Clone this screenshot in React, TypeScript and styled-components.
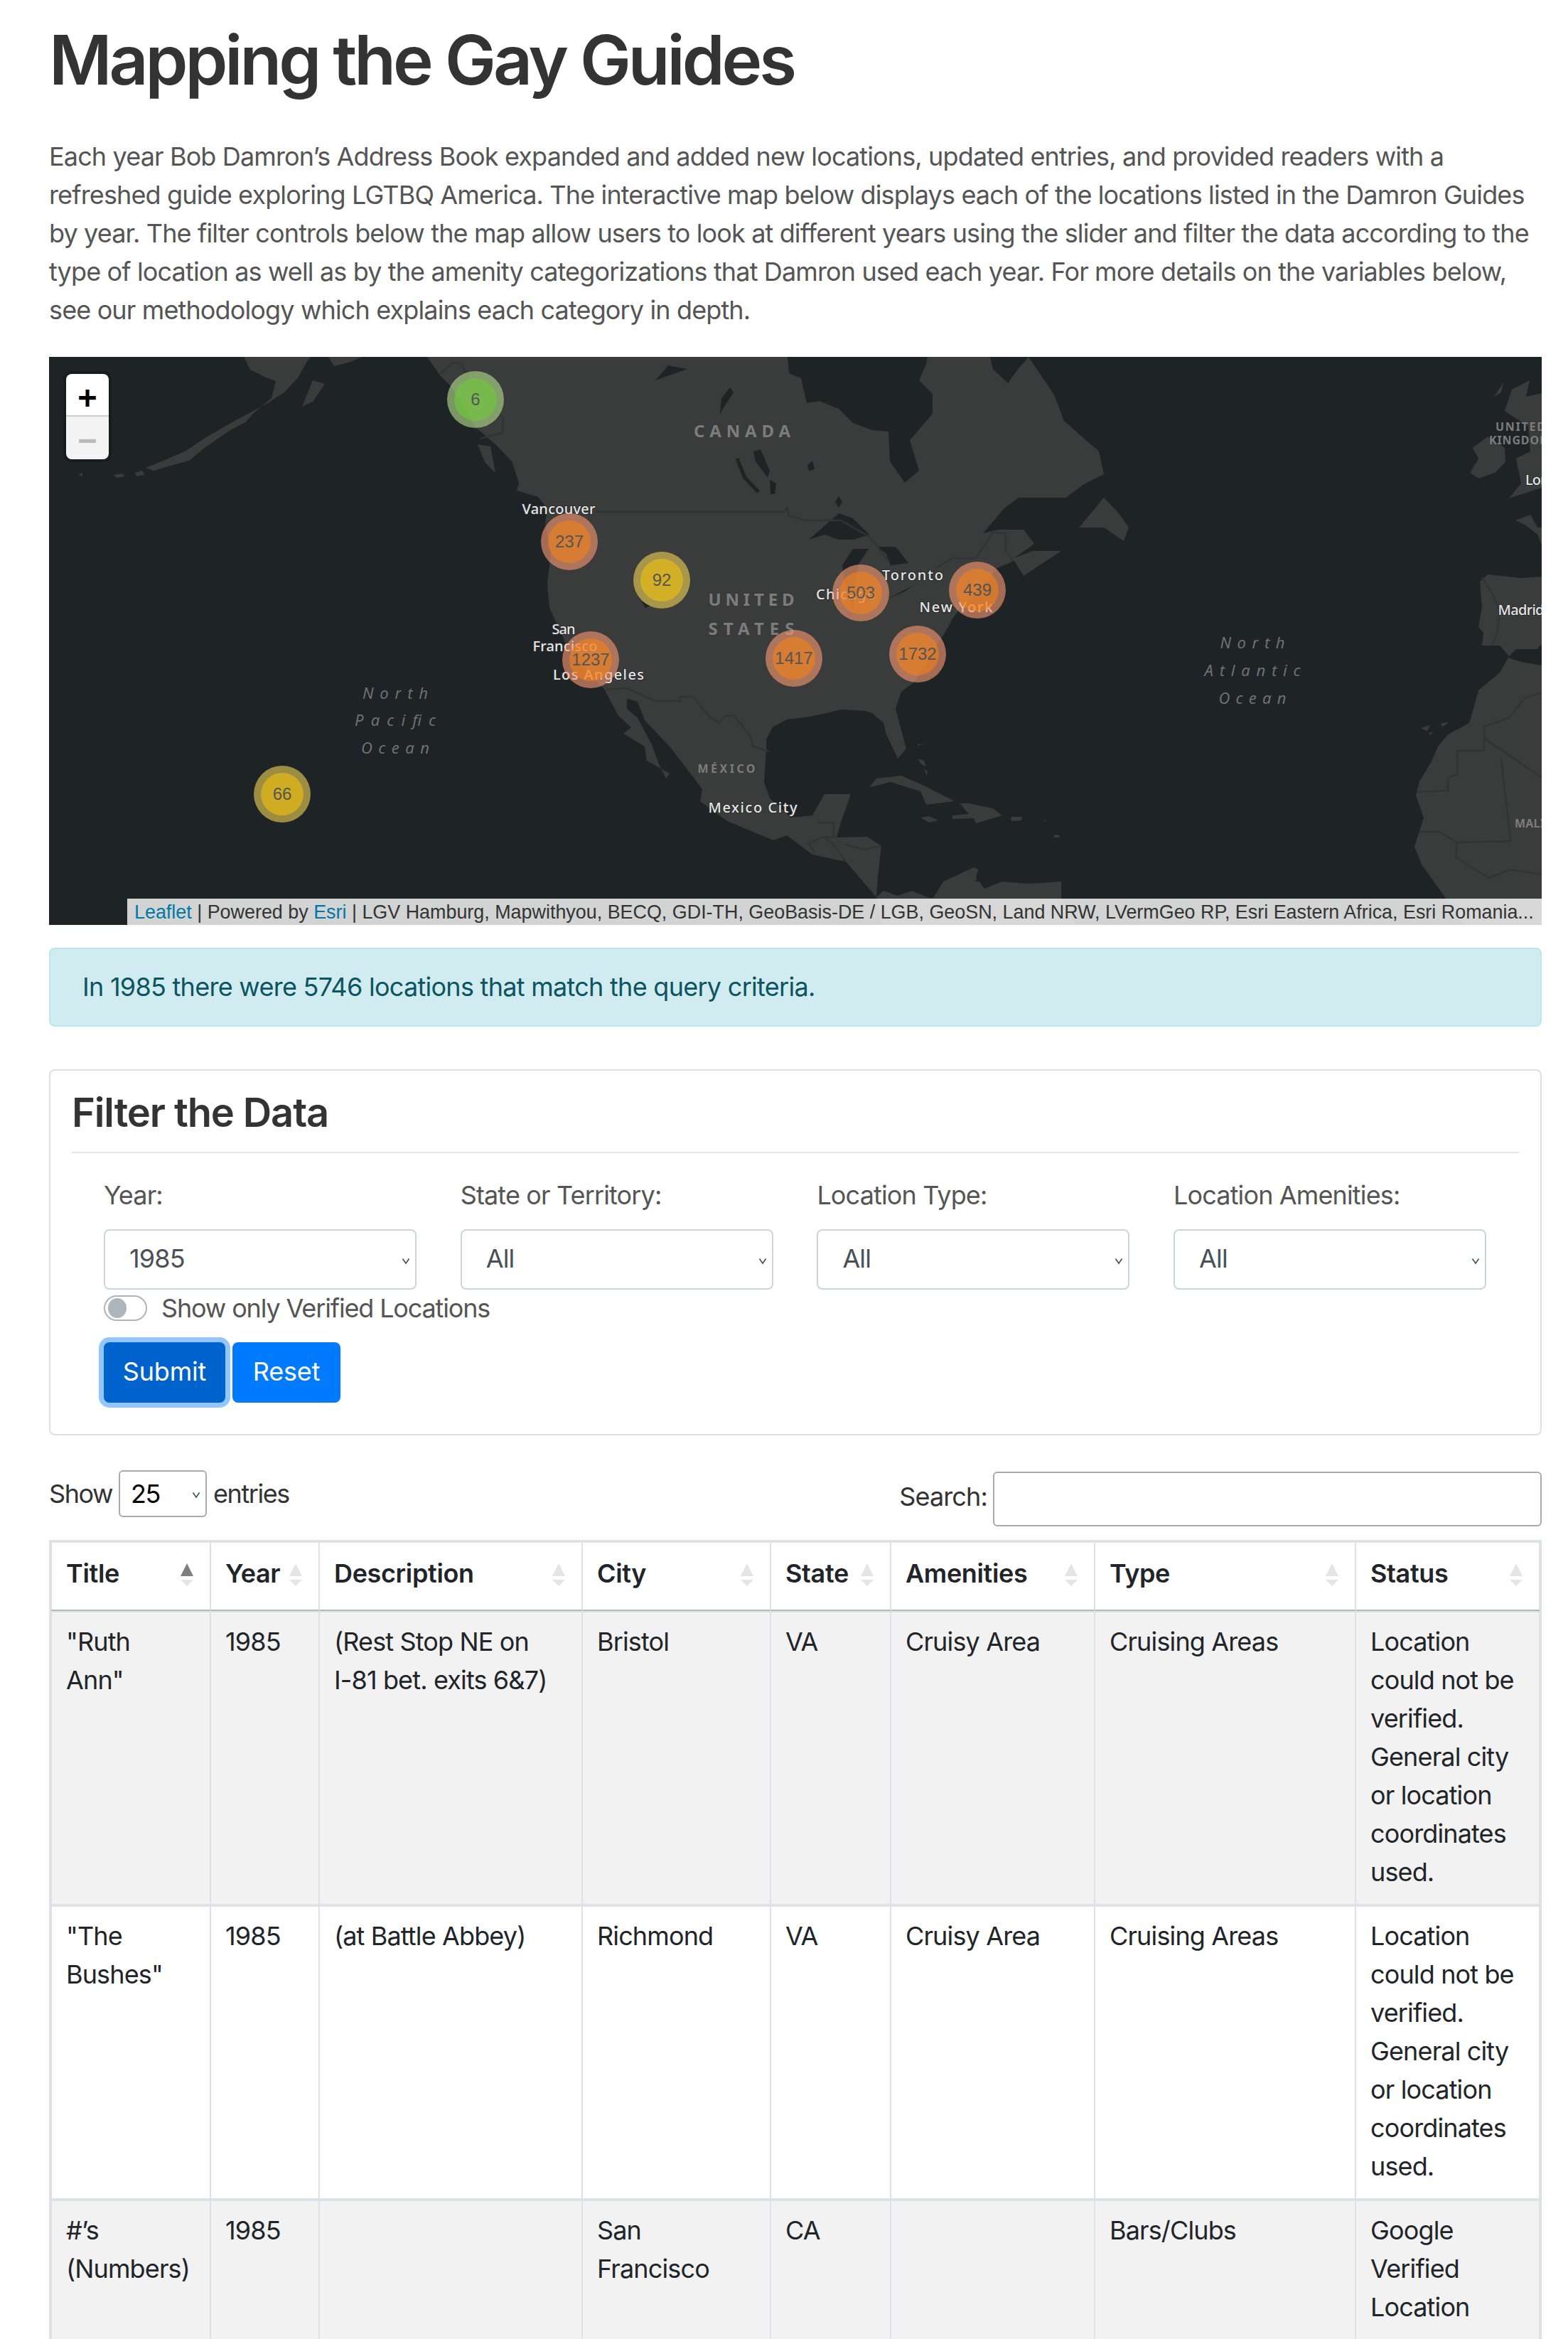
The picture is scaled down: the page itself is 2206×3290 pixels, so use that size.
import { createGlobalStyle } from "styled-components";
import styled from "styled-components";

const GlobalStyle = createGlobalStyle`
html, body {
  margin: 0;
  padding: 0;
  height: 3290px;
  overflow: hidden;
  background: #fff;
}
body {
  font-family: "Inter", "Liberation Sans", sans-serif;
  font-size: 36px;
  line-height: 54px;
  letter-spacing: -0.024em;
  color: #555;
}
`;

const LAND = [
  // north america, down the pacific coast and back up the atlantic side
  "M601 502L619 528L633 542L652 570L667 599L697 625L720 649L730 679L727 690L757 699L770 715L767 735L775 779L770 822L773 855L787 885L800 915L827 945L850 969L870 1007L888 1023L877 1032L907 1050L910 1070L942 1088L937 1095L927 1075L917 1047L897 1010L882 997L882 983L897 987L907 1013L942 1050L963 1077L988 1110L985 1127L1023 1155L1088 1182L1107 1175L1143 1202L1190 1212L1233 1262L1235 1233L1240 1190L1220 1177L1177 1178L1183 1157L1197 1117L1160 1117L1143 1147L1113 1150L1083 1123L1075 1100L1078 1053L1078 1040L1087 1023L1107 1012L1140 1008L1163 1003L1183 998L1217 1000L1227 1003L1243 1017L1247 1033L1263 1067L1275 1053L1260 997L1268 973L1287 959L1328 892L1343 865L1337 875L1353 852L1372 835L1403 799L1427 789L1440 810L1493 775L1453 775L1427 785L1455 765L1440 745L1405 745L1383 750L1413 715L1433 700L1500 700L1525 681L1553 667L1546 635L1497 592L1483 555L1447 502L1430 522L1418 539L1397 519L1393 502L1305 502L1303 512L1293 535L1312 554L1312 582L1280 619L1293 662L1273 679L1252 649L1250 607L1227 605L1200 595L1180 575L1153 564L1135 567L1127 532L1110 525L1108 502Z",
  // alaska
  "M343 502L352 520L372 530L388 536L382 560L358 580L345 594L322 606L305 618L285 632L266 648L240 655L216 662L205 658L225 650L262 634L290 615L330 592L375 568L400 552L420 530L431 510L437 502Z",
  "M462 502L470 515L490 510L510 502Z",
  "M440 535L457 540L440 565L425 572Z",
  "M190 665L200 662L204 668L192 670ZM160 668L172 666L176 670L164 672ZM110 667L116 665L116 670Z",
  // haida gwaii, newfoundland
  "M672 625L690 628L697 665L682 650Z",
  "M1518 742L1553 700L1574 722L1588 742L1581 761L1553 742Z",
  // caribbean
  "M1223 1107L1233 1095L1268 1091L1300 1105L1343 1127L1303 1132L1295 1113L1253 1100L1233 1105Z",
  "M1350 1130L1363 1130L1397 1137L1410 1147L1373 1158L1370 1151L1340 1152L1340 1147L1363 1145Z",
  "M1295 1150L1307 1148L1320 1154L1307 1157Z",
  "M1422 1149L1438 1149L1437 1154L1423 1155Z",
  "M1291 1067L1300 1070L1303 1078L1296 1075ZM1300 1081L1305 1085L1304 1092ZM1291 1047L1300 1046L1291 1049Z",
  "M1483 1174L1491 1175L1490 1178L1483 1178ZM1468 1153L1471 1154L1470 1156Z",
  // south america
  "M1233 1262L1243 1253L1263 1260L1283 1253L1307 1263L1313 1263L1327 1240L1370 1220L1377 1223L1373 1233L1385 1250L1410 1240L1447 1243L1493 1240L1493 1263L1515 1301L1240 1301Z",
  // europe and africa
  "M2127 548L2152 535L2147 558L2169 553L2169 686L2123 701L2140 680L2133 645L2153 635L2150 600L2120 580L2117 578Z",
  "M2072 630L2093 614L2117 630L2118 650L2103 665L2080 673L2068 665L2080 645Z",
  "M2102 558L2115 538L2112 552Z",
  "M2132 732L2153 724L2163 742L2169 742L2169 767L2163 752L2147 739Z",
  "M2082 818L2093 808L2140 813L2169 811L2169 905L2163 913L2133 913L2123 923L2110 908L2085 908L2087 890L2080 882L2085 854Z",
  "M2122 925L2140 931L2169 936L2169 1301L2060 1301L2033 1262L2000 1216L1990 1191L2003 1150L1992 1119L1997 1099L2013 1073L2023 1050L2037 1033L2067 1017L2073 997L2080 971L2110 946Z",
  "M2040 1015L2030 1022L2026 1018ZM1998 1024L2012 1020L2008 1028ZM2010 1030L2016 1030L2012 1034Z",
];

const WATER = [
  // inland lakes
  "M922 535L940 514L967 519L950 525L930 532Z",
  "M1015 560L1027 545L1032 552L1020 570L1013 582Z",
  "M1060 635L1070 632L1083 662L1080 672L1063 649Z",
  "M1083 675L1092 680L1090 695L1084 695Z",
  "M1138 759L1180 722L1200 729L1223 752L1200 759L1180 759L1160 752Z",
  "M1185 795L1200 772L1222 772L1207 795L1200 860L1188 815Z",
  "M1233 769L1260 769L1278 792L1253 795L1247 779Z",
  "M1250 842L1287 822L1273 832Z",
  "M1175 706L1180 698L1185 706L1180 714Z",
  "M902 845L915 852L908 855Z",
  "M1136 655L1143 648L1146 660L1138 662Z",
  "M1256 645L1268 645L1262 654Z",
  "M1276 589L1285 578L1282 590Z",
  "M1380 1225L1372 1240L1382 1240Z",
];

const RIVERS = "M1037 645L1048 672L1067 692";

const BORDERS = [
  "M838 720L1103 720L1107 715L1110 725L1133 732L1183 732L1223 755L1250 789",
  "M1317 799L1340 785L1373 785L1397 749L1415 750L1415 775L1425 789",
  "M620 525L637 510L650 512L655 525L708 589L707 609L675 617",
  "M853 970L882 968L922 986L957 986L957 980L975 980L997 1007L1012 1017L1020 1007L1033 1007L1055 1035L1060 1050L1082 1057",
  "M1150 1157L1173 1157L1173 1178L1158 1177L1138 1187L1147 1200M1158 1177L1172 1187L1190 1212M1190 1188L1215 1195L1240 1190",
  "M2087 1056L2050 1056L2050 1089L2037 1094L2037 1112L1993 1114",
  "M2088 1056L2088 1022L2123 1010L2145 982L2169 974",
  "M2088 1038L2169 1094",
  "M2112 1068L2125 1183L2050 1185L2025 1170L1997 1170",
  "M2050 1185L2048 1205L2070 1220L2095 1235L2125 1223L2169 1230",
  "M2085 812L2100 836L2110 860L2106 890L2100 908",
];

type LabelKind = "city" | "country" | "small" | "ocean";

const LABELS: { t: string; x: number; w: number; y: number; kind: LabelKind }[] = [
  { t: "CANADA", x: 1044, w: 136, y: 605, kind: "country" },
  { t: "UNITED", x: 1057, w: 121, y: 842, kind: "country" },
  { t: "STATES", x: 1057, w: 121, y: 883, kind: "country" },
  { t: "MÉXICO", x: 1022, w: 81, y: 1081, kind: "small" },
  { t: "UNITED", x: 2139, w: 70, y: 600, kind: "small" },
  { t: "KINGDOM", x: 2138, w: 86, y: 619, kind: "small" },
  { t: "MALI", x: 2152, w: 42, y: 1158, kind: "small" },
  { t: "Vancouver", x: 786, w: 103, y: 715, kind: "city" },
  { t: "San", x: 793, w: 33, y: 884, kind: "city" },
  { t: "Francisco", x: 795, w: 91, y: 908, kind: "city" },
  { t: "Los Angeles", x: 842, w: 128, y: 948, kind: "city" },
  { t: "Toronto", x: 1284, w: 86, y: 808, kind: "city" },
  { t: "Chicago", x: 1190, w: 84, y: 835, kind: "city" },
  { t: "New York", x: 1345, w: 103, y: 853, kind: "city" },
  { t: "Mexico City", x: 1059, w: 125, y: 1135, kind: "city" },
  { t: "London", x: 2180, w: 68, y: 674, kind: "city" },
  { t: "Madrid", x: 2140, w: 65, y: 857, kind: "city" },
  { t: "North", x: 556, w: 92, y: 974, kind: "ocean" },
  { t: "Pacific", x: 556, w: 114, y: 1012, kind: "ocean" },
  { t: "Ocean", x: 556, w: 96, y: 1051, kind: "ocean" },
  { t: "North", x: 1762, w: 91, y: 903, kind: "ocean" },
  { t: "Atlantic", x: 1762, w: 135, y: 942, kind: "ocean" },
  { t: "Ocean", x: 1762, w: 95, y: 981, kind: "ocean" },
];

type Size = "small" | "medium" | "large";

const MARKERS: { n: number; x: number; y: number; size: Size }[] = [
  { n: 6, x: 669, y: 562, size: "small" },
  { n: 237, x: 801, y: 762, size: "large" },
  { n: 92, x: 931, y: 816, size: "medium" },
  { n: 1237, x: 831, y: 928, size: "large" },
  { n: 66, x: 397, y: 1117, size: "medium" },
  { n: 503, x: 1211, y: 834, size: "large" },
  { n: 439, x: 1375, y: 830, size: "large" },
  { n: 1732, x: 1291, y: 920, size: "large" },
  { n: 1417, x: 1117, y: 926, size: "large" },
];

const FILTERS = [
  { label: "Year:", value: "1985" },
  { label: "State or Territory:", value: "All" },
  { label: "Location Type:", value: "All" },
  { label: "Location Amenities:", value: "All" },
];

const COLUMNS = [
  { title: "Title", width: 226 },
  { title: "Year", width: 153 },
  { title: "Description", width: 370 },
  { title: "City", width: 265 },
  { title: "State", width: 169 },
  { title: "Amenities", width: 287 },
  { title: "Type", width: 367 },
  { title: "Status", width: 259 },
];

const NOT_VERIFIED = "Location could not be verified. General city or location coordinates used.";

// \n is where the reference wraps and the fallback font would not
const ROWS = [
  ['"Ruth\nAnn"', "1985", "(Rest Stop NE on\nI-81 bet. exits 6&7)", "Bristol", "VA", "Cruisy Area", "Cruising Areas", NOT_VERIFIED],
  ['"The\nBushes"', "1985", "(at Battle Abbey)", "Richmond", "VA", "Cruisy Area", "Cruising Areas", NOT_VERIFIED],
  ["#’s\n(Numbers)", "1985", "", "San\nFrancisco", "CA", "", "Bars/Clubs", "Google Verified Location"],
];

const Chevron = () => (
  <ChevronSvg viewBox="0 0 12 10">
    <path d="M1.5 1.5L6 8l4.5-6.5" fill="none" stroke="currentColor" strokeWidth="1.6" />
  </ChevronSvg>
);

const App = () => {
  return (
    <Page>
      <GlobalStyle />
      <Title>Mapping the Gay Guides</Title>
      <Intro>
        Each year Bob Damron’s Address Book expanded and added new locations, updated entries, and provided readers
        with a refreshed guide exploring LGTBQ America. The interactive map below displays each of the locations listed
        in the Damron Guides by year. The filter controls below the map allow users to look at different years using the
        slider and filter the data according to the type of location as well as by the amenity categorizations that
        Damron used each year. For more details on the variables below, see our methodology which explains each category
        in depth.
      </Intro>

      <MapPanel>
        <MapDrawing viewBox="69 502 2100 799">
          <rect x="69" y="502" width="2100" height="799" fill="#1e2326" />
          {LAND.map((d) => (
            <path key={d} d={d} fill="#3a3b3b" />
          ))}
          {WATER.map((d) => (
            <path key={d} d={d} fill="#1e2326" />
          ))}
          <path d={RIVERS} fill="none" stroke="#1e2326" strokeWidth="5" />
          {BORDERS.map((d) => (
            <path key={d} d={d} fill="none" stroke="#323434" strokeWidth="2.5" />
          ))}
          {LABELS.map((l) => (
            <MapLabel
              key={l.t + l.x}
              $kind={l.kind}
              x={l.x}
              y={l.y}
              textAnchor="middle"
              dominantBaseline="central"
              textLength={l.w}
              lengthAdjust="spacing"
            >
              {l.t}
            </MapLabel>
          ))}
        </MapDrawing>

        {MARKERS.map((m) => (
          <Marker key={m.n} $size={m.size} $x={m.x - 69} $y={m.y - 502}>
            <MarkerCore $size={m.size}>{m.n}</MarkerCore>
          </Marker>
        ))}

        <ZoomControl>
          <ZoomButton>+</ZoomButton>
          <ZoomButton $disabled>−</ZoomButton>
        </ZoomControl>

        <Attribution>
          <AttrLink>Leaflet</AttrLink> | Powered by <AttrLink>Esri</AttrLink> | LGV Hamburg, Mapwithyou, BECQ, GDI-TH,
          GeoBasis-DE / LGB, GeoSN, Land NRW, LVermGeo RP, Esri Eastern Africa, Esri Romania...
        </Attribution>
      </MapPanel>

      <Alert>In 1985 there were 5746 locations that match the query criteria.</Alert>

      <Card>
        <CardTitle>Filter the Data</CardTitle>
        <FilterForm>
          <FilterGrid>
            {FILTERS.map((f) => (
              <FilterField key={f.label}>
                <FilterLabel>{f.label}</FilterLabel>
                <SelectWrap>
                  <FilterSelect defaultValue={f.value}>
                    <option>{f.value}</option>
                  </FilterSelect>
                  <Chevron />
                </SelectWrap>
              </FilterField>
            ))}
          </FilterGrid>
          <SwitchRow>
            <Switch>
              <SwitchKnob />
            </Switch>
            Show only Verified Locations
          </SwitchRow>
          <Buttons>
            <Button $focused>Submit</Button>
            <Button>Reset</Button>
          </Buttons>
        </FilterForm>
      </Card>

      <TableControls>
        <LengthControl>
          Show
          <SelectWrap>
            <LengthSelect defaultValue="25">
              <option>25</option>
            </LengthSelect>
            <Chevron />
          </SelectWrap>
          entries
        </LengthControl>
        <SearchControl>
          Search:
          <SearchInput type="text" />
        </SearchControl>
      </TableControls>

      <DataTable>
        <colgroup>
          {COLUMNS.map((c) => (
            <col key={c.title} width={c.width} />
          ))}
        </colgroup>
        <thead>
          <tr>
            {COLUMNS.map((c, i) => (
              <HeadCell key={c.title}>
                {c.title}
                <SortUp $active={i === 0} />
                <SortDown />
              </HeadCell>
            ))}
          </tr>
        </thead>
        <tbody>
          {ROWS.map((row, r) => (
            <BodyRow key={row[0]} $odd={r % 2 === 0}>
              {row.map((cell, c) => (
                <BodyCell key={c}>{cell}</BodyCell>
              ))}
            </BodyRow>
          ))}
        </tbody>
      </DataTable>
    </Page>
  );
};

export default App;

const Page = styled.div`
width: 2100px;
margin-left: 69px;
`;

const Title = styled.h1`
margin: 27px 0 51px;
font-size: 96px;
line-height: 115px;
font-weight: 600;
letter-spacing: -0.042em;
color: #333;
`;

const Intro = styled.p`
margin: 0 0 39px;
`;

const MapPanel = styled.div`
position: relative;
height: 799px;
overflow: hidden;
background: #1e2326;
`;

const MapDrawing = styled.svg`
display: block;
width: 2100px;
height: 799px;
`;

const labelStyles: Record<LabelKind, string> = {
  city: `font: 500 20px "Noto Sans", sans-serif; fill: #e6e6e6; stroke: #2c2e2e; stroke-width: 2px; paint-order: stroke;`,
  country: `font: 700 24px "Noto Sans", sans-serif; fill: #7c7c7c;`,
  small: `font: 700 16px "Noto Sans", sans-serif; fill: #7c7c7c;`,
  ocean: `font: italic 400 22px "Noto Sans", sans-serif; fill: #6f7172;`,
};

const MapLabel = styled.text<{ $kind: LabelKind }>`
letter-spacing: 0;
${(p) => labelStyles[p.$kind]}
`;

const markerColors: Record<Size, [string, string]> = {
  small: ["rgba(181, 226, 140, 0.6)", "rgba(110, 204, 57, 0.6)"],
  medium: ["rgba(241, 211, 87, 0.6)", "rgba(240, 194, 12, 0.6)"],
  large: ["rgba(253, 156, 115, 0.6)", "rgba(241, 128, 23, 0.6)"],
};

const Marker = styled.div<{ $size: Size; $x: number; $y: number }>`
position: absolute;
left: ${(p) => p.$x - 40}px;
top: ${(p) => p.$y - 40}px;
width: 80px;
height: 80px;
border-radius: 50%;
padding: 10px;
box-sizing: border-box;
background: ${(p) => markerColors[p.$size][0]};
`;

const MarkerCore = styled.div<{ $size: Size }>`
width: 60px;
height: 60px;
border-radius: 50%;
background: ${(p) => markerColors[p.$size][1]};
text-align: center;
font: 24px/60px "Liberation Sans", sans-serif;
letter-spacing: 0;
color: #555;
`;

const ZoomControl = styled.div`
position: absolute;
left: 24px;
top: 24px;
width: 60px;
border-radius: 8px;
overflow: hidden;
box-shadow: 0 0 0 4px rgba(0, 0, 0, 0.2);
`;

const ZoomButton = styled.div<{ $disabled?: boolean }>`
height: ${(p) => (p.$disabled ? "60px" : "58px")};
border-bottom: ${(p) => (p.$disabled ? "none" : "2px solid #ccc")};
background: ${(p) => (p.$disabled ? "#f4f4f4" : "#fff")};
color: ${(p) => (p.$disabled ? "#bbb" : "#000")};
text-align: center;
font: 700 44px/66px "DejaVu Sans Mono", "Liberation Mono", monospace;
letter-spacing: 0;
`;

const Attribution = styled.div`
position: absolute;
right: 0;
bottom: 0;
box-sizing: border-box;
width: 1990px;
height: 37px;
padding: 0 10px;
background: rgba(255, 255, 255, 0.8);
font: 26.9px/38px "Liberation Sans", sans-serif;
letter-spacing: 0;
color: #333;
white-space: nowrap;
overflow: hidden;
`;

const AttrLink = styled.span`
color: #0078a8;
`;

const Alert = styled.div`
margin-top: 32px;
box-sizing: border-box;
height: 111px;
padding: 26px 45px;
background: #d1ecf1;
border: 2px solid #bee5eb;
border-radius: 8px;
letter-spacing: -0.02em;
color: #0c5460;
`;

const Card = styled.div`
margin-top: 60px;
box-sizing: border-box;
height: 515px;
padding: 24px 30px 0;
border: 2px solid #dfdfdf;
border-radius: 8px;
`;

const CardTitle = styled.h3`
margin: 0;
height: 90px;
border-bottom: 2px solid #e5e5e5;
font-size: 56px;
line-height: 71px;
font-weight: 600;
letter-spacing: -0.02em;
color: #333;
`;

const FilterForm = styled.div`
padding: 32px 0 0 45px;
`;

const FilterGrid = styled.div`
display: grid;
grid-template-columns: repeat(4, 440px);
column-gap: 61.7px;
`;

const FilterField = styled.div``;

const FilterLabel = styled.div`
margin-bottom: 21px;
`;

const SelectWrap = styled.div`
position: relative;
color: #495057;
`;

const ChevronSvg = styled.svg`
position: absolute;
right: 9px;
top: 50%;
width: 12px;
height: 10px;
margin-top: -3px;
pointer-events: none;
`;

const FilterSelect = styled.select`
display: block;
width: 440px;
height: 85px;
box-sizing: border-box;
padding: 0 0 4px 34px;
appearance: none;
background: #fff;
border: 2px solid #ced4da;
border-radius: 8px;
font: inherit;
letter-spacing: inherit;
color: #495057;
`;

const SwitchRow = styled.div`
display: flex;
align-items: center;
gap: 20px;
height: 52px;
letter-spacing: -0.032em;
`;

const Switch = styled.div`
width: 61px;
height: 36px;
box-sizing: border-box;
padding: 2px 4px;
border: 2px solid #adb5bd;
border-radius: 18px;
`;

const SwitchKnob = styled.div`
width: 26px;
height: 28px;
border-radius: 50%;
background: #adb5bd;
`;

const Buttons = styled.div`
display: flex;
gap: 10px;
margin-top: 22px;
`;

const Button = styled.button<{ $focused?: boolean }>`
width: ${(p) => (p.$focused ? "171px" : "152px")};
height: 85px;
padding: 0 0 3px;
border: none;
border-radius: 8px;
background: ${(p) => (p.$focused ? "#0062cc" : "#007bff")};
box-shadow: ${(p) => (p.$focused ? "0 0 0 7px #93c6ff" : "none")};
font: inherit;
letter-spacing: -0.005em;
color: #fff;
`;

const TableControls = styled.div`
display: flex;
justify-content: space-between;
align-items: flex-start;
height: 77px;
margin: 51px 0 19px;
`;

const LengthControl = styled.div`
display: flex;
align-items: center;
gap: 9px;
height: 62px;
letter-spacing: -0.04em;
color: #333;
`;

const LengthSelect = styled.select`
display: block;
width: 124px;
height: 66px;
box-sizing: border-box;
padding: 0 0 0 15px;
appearance: none;
background: #fff;
border: 2px solid #aaa;
border-radius: 6px;
font: inherit;
letter-spacing: inherit;
color: #000;
`;

const SearchControl = styled.div`
display: flex;
align-items: flex-start;
gap: 8px;
line-height: 70px;
color: #333;
`;

const SearchInput = styled.input`
display: block;
width: 772px;
height: 77px;
box-sizing: border-box;
padding: 0 8px;
background: #fff;
border: 2px solid #aaa;
border-radius: 6px;
`;

const DataTable = styled.table`
table-layout: fixed;
width: 2100px;
border-collapse: separate;
border-spacing: 0;
border: 2px solid #dee2e6;
`;

const HeadCell = styled.th`
position: relative;
box-sizing: border-box;
padding: 16px 20px 24px;
border-top: 2px solid #dee2e6;
border-right: 2px solid #dee2e6;
border-bottom: 2px solid #b4b7b9;
text-align: left;
font-weight: 600;
letter-spacing: -0.01em;
color: #212529;
&:first-child {
  border-left: 2px solid #dee2e6;
}
`;

const SortUp = styled.i<{ $active?: boolean }>`
position: absolute;
right: 23px;
top: 29px;
width: 0;
height: 0;
border-left: 9px solid transparent;
border-right: 9px solid transparent;
border-bottom: 18px solid ${(p) => (p.$active ? "#7f7f80" : "#e5e5e5")};
`;

const SortDown = styled.i`
position: absolute;
right: 23px;
top: 52px;
width: 0;
height: 0;
border-left: 9px solid transparent;
border-right: 9px solid transparent;
border-top: 9px solid #e5e5e5;
`;

const BodyRow = styled.tr<{ $odd: boolean }>`
background: ${(p) => (p.$odd ? "#f2f2f2" : "#fff")};
`;

const BodyCell = styled.td`
box-sizing: border-box;
padding: 14px 20px 18px;
border-top: 2px solid #dee2e6;
border-right: 2px solid #dee2e6;
border-bottom: 2px solid #dee2e6;
vertical-align: top;
white-space: pre-line;
color: #212529;
&:first-child {
  border-left: 2px solid #dee2e6;
}
`;
